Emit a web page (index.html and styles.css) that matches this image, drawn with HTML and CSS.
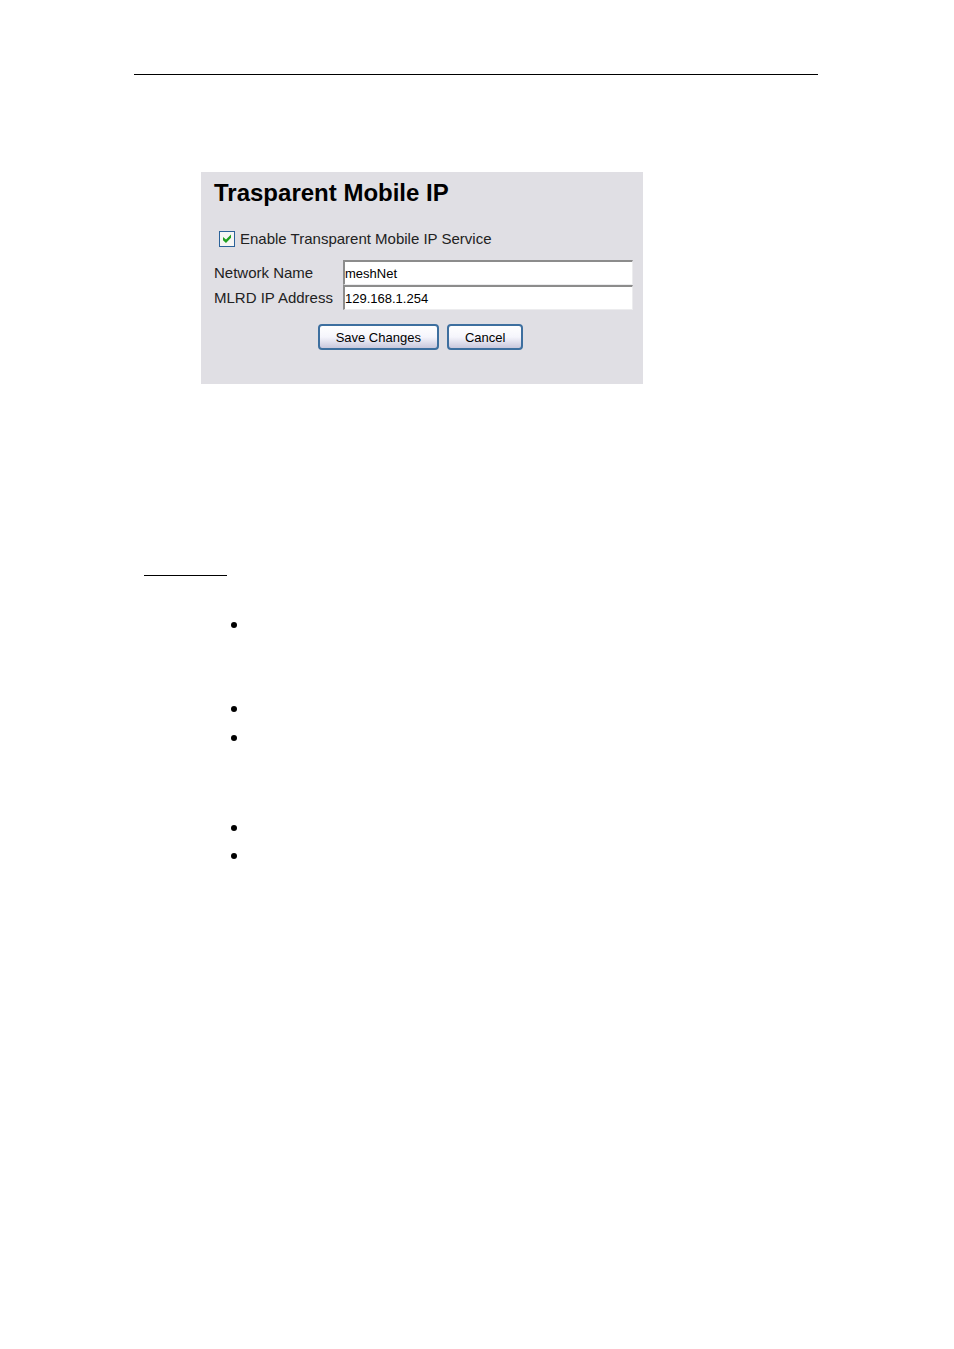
FILE: index.html
```html
<!DOCTYPE html>
<html lang="en">
<head>
    <meta charset="UTF-8">
    <meta name="viewport" content="width=device-width, initial-scale=1.0">
    <title>Trasparent Mobile IP</title>
    <link rel="stylesheet" href="styles.css">
</head>
<body>
    <main class="page">
        <form class="panel">
            <h1>Trasparent Mobile IP</h1>
            <div class="enable">
                <input type="checkbox" id="enable" checked>
                <svg class="tick" viewBox="0 0 16 16" aria-hidden="true">
                    <path d="M4 6 L7 8.6 L12 3.6 V6.8 L7 12 L4 9.2 Z"/>
                </svg>
                <label for="enable">Enable Transparent Mobile IP Service</label>
            </div>
            <div class="fields">
                <label for="network">Network Name</label>
                <input type="text" id="network" value="meshNet">
                <label for="address">MLRD IP Address</label>
                <input type="text" id="address" value="129.168.1.254">
            </div>
            <div class="buttons">
                <button type="button">Save Changes</button>
                <button type="button">Cancel</button>
            </div>
        </form>
        <hr class="underline">
        <ul class="notes">
            <li></li>
            <li></li>
            <li></li>
            <li></li>
            <li></li>
        </ul>
    </main>
</body>
</html>
```
FILE: styles.css
```css
* {
    box-sizing: border-box;
}

body {
    margin: 0;
    background: white;
    color: #222;
    font-family: 'Liberation Sans', Arial, sans-serif;
}

.page {
    margin: 74px 136px 0 134px;
    border-top: 1px solid black;
    padding-top: 97px;
}

.panel {
    max-width: 442px;
    margin-left: 67px;
    padding: 7px 10px 34px 13px;
    background: #e0dfe4;
}

h1 {
    margin: 0;
    color: black;
    font-size: 24px;
    line-height: 28px;
}

.enable {
    display: grid;
    grid-template-columns: 16px 1fr;
    align-items: center;
    column-gap: 5px;
    margin: 23px 0 12px 5px;
    font-size: 15px;
    line-height: 18px;
}

.enable input {
    appearance: none;
    grid-area: 1 / 1;
    width: 16px;
    height: 16px;
    margin: 0;
    border: 1px solid #2b6299;
    background: #f6f6f4;
}

.tick {
    display: none;
    grid-area: 1 / 1;
    width: 16px;
    height: 16px;
    fill: #21a121;
    pointer-events: none;
}

.enable input:checked + .tick {
    display: block;
}

.fields {
    display: grid;
    grid-template-columns: 117px 1fr;
    align-items: center;
    column-gap: 12px;
    font-size: 15px;
    white-space: nowrap;
}

.fields input {
    width: 100%;
    height: 25px;
    padding: 0;
    border: 1px solid #ececee;
    border-top: 2px solid #8c8c8c;
    border-left: 2px solid #8c8c8c;
    background: white;
    color: black;
    font-family: inherit;
    font-size: 13px;
}

.buttons {
    display: flex;
    justify-content: center;
    gap: 8px;
    margin-top: 14px;
    padding-right: 6px;
}

button {
    height: 26px;
    padding: 0 16px;
    border: 2px solid #3d6f9f;
    border-radius: 4px;
    background: linear-gradient(white, #f5f5fc 50%, #c8c7dc);
    color: black;
    font-family: inherit;
    font-size: 13px;
}

.underline {
    width: 83px;
    height: 1px;
    margin: 191px 0 0 10px;
    border: none;
    background: black;
}

.notes {
    display: grid;
    grid-template-rows: 84px 29px 90px 28px 28px;
    margin: 46px 0 0 97px;
    padding: 0;
    list-style: none;
}

.notes li::before {
    content: "";
    display: block;
    width: 6px;
    height: 6px;
    border-radius: 50%;
    background: black;
}
```
